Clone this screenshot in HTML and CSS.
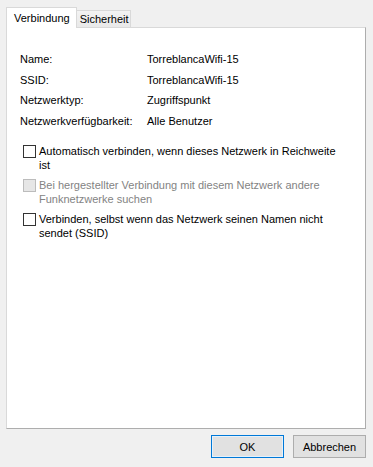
FILE: index.html
```html
<!DOCTYPE html>
<html lang="de">
<head>
    <meta charset="UTF-8">
    <title>Eigenschaften für Drahtlosnetzwerk</title>
    <link rel="stylesheet" href="styles.css">
</head>
<body>
    <div class="dialog">
        <div class="tabs">
            <div class="tab active">Verbindung</div>
            <div class="tab">Sicherheit</div>
        </div>

        <div class="panel">
            <div class="props">
                <div class="label">Name:</div>
                <div class="value">TorreblancaWifi-15</div>
                <div class="label">SSID:</div>
                <div class="value">TorreblancaWifi-15</div>
                <div class="label">Netzwerktyp:</div>
                <div class="value">Zugriffspunkt</div>
                <div class="label">Netzwerkverfügbarkeit:</div>
                <div class="value">Alle Benutzer</div>
            </div>

            <div class="options">
                <label class="check">
                    <span class="box"></span>
                    <span class="text">Automatisch verbinden, wenn dieses Netzwerk in Reichweite ist</span>
                </label>
                <label class="check disabled">
                    <span class="box"></span>
                    <span class="text">Bei hergestellter Verbindung mit diesem Netzwerk andere Funknetzwerke suchen</span>
                </label>
                <label class="check">
                    <span class="box"></span>
                    <span class="text">Verbinden, selbst wenn das Netzwerk seinen Namen nicht sendet (SSID)</span>
                </label>
            </div>
        </div>

        <div class="buttons">
            <button class="btn default">OK</button>
            <button class="btn">Abbrechen</button>
        </div>
    </div>
</body>
</html>
```

FILE: styles.css
```css
/* Base */
body {
    margin: 0;
    background: #f0f0f0;
    font-family: 'Liberation Sans', Arial, sans-serif;
    font-size: 11px;
    color: #000;
}

.dialog {
    width: 373px;
    height: 467px;
    display: flex;
    flex-direction: column;
}

/* Tabs */
.tabs {
    display: flex;
    align-items: flex-end;
    padding: 7px 0 0 6px;
    position: relative;
    z-index: 1;
}

.tab {
    height: 16px;
    line-height: 17px;
    padding: 0 1px 0 3px;
    border: 1px solid #d9d9d9;
    border-bottom: none;
    border-left: none;
    background: linear-gradient(#f3f3f3, #e9e9e9);
}

.tab.active {
    height: 20px;
    line-height: 20px;
    padding: 0 6px 0 7px;
    background: #fff;
    border-color: #d9d9d9;
    border-left: 1px solid #d9d9d9;
    margin-bottom: -1px;
}

/* Panel */
.panel {
    height: 402px;
    margin: 0 7px 0 6px;
    background: #fff;
    border: 1px solid #adadad;
    border-top-color: #d9d9d9;
    border-left-color: #d9d9d9;
    padding: 21px 0 0 13px;
    box-sizing: border-box;
}

.props {
    display: grid;
    grid-template-columns: 127px 1fr;
    grid-auto-rows: 20.5px;
    align-items: center;
}

.options {
    margin-top: 13px;
    padding-left: 3px;
    display: flex;
    flex-direction: column;
    gap: 6px;
}

.check {
    display: flex;
    align-items: flex-start;
    line-height: 14px;
    width: 314px;
}

.box {
    flex: none;
    width: 11px;
    height: 11px;
    border: 1px solid #333;
    background: #fff;
    margin-top: 1px;
    margin-right: 3px;
}

.check.disabled {
    color: #838383;
}

.check.disabled .box {
    border-color: #bcbcbc;
    background: #e6e6e6;
}

/* Buttons */
.buttons {
    display: flex;
    justify-content: flex-end;
    gap: 9px;
    padding: 6px 7px 0 0;
}

.btn {
    width: 73px;
    height: 23px;
    font-family: inherit;
    font-size: 11px;
    border: 1px solid #adadad;
    background: #e1e1e1;
    color: #000;
    padding: 0;
}

.btn.default {
    border: 1px solid #0078d7;
    box-shadow: inset 0 0 0 1px #e5f1fb;
    background: #e1e1e1;
}
```
